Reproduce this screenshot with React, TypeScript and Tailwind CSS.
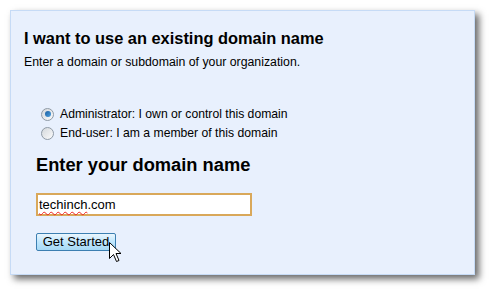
import { useState } from 'react'

function Radio({ checked }: { checked: boolean }) {
  return (
    <span className="relative flex h-[13px] w-[13px] shrink-0 items-center justify-center rounded-full border border-[#8f9aa5] bg-gradient-to-br from-[#d4d8dc] to-[#fbfbfb]">
      {checked && <span className="h-[6px] w-[6px] rounded-full bg-gradient-to-br from-[#1b5fa0] to-[#4fa1e0]" />}
    </span>
  )
}

function Cursor() {
  return (
    <svg className="absolute left-[73px] top-[9px]" width="13" height="21" viewBox="0 0 13 21">
      <path
        d="M0.5 0.5 L0.5 16.5 L4.5 12.5 L7.5 19.5 L10 18.5 L7 11.5 L12 11.5 Z"
        fill="#fff"
        stroke="#000"
        strokeWidth="1"
        strokeLinejoin="round"
      />
    </svg>
  )
}

export default function App() {
  const [role, setRole] = useState('admin')

  return (
    <div className="h-[292px] w-[493px] bg-white pl-[10px] pt-[10px]" style={{ fontFamily: '"Liberation Sans", Arial, sans-serif' }}>
      <div className="h-[265px] w-[465px] border border-[#c6dbf6] bg-[#e8f0fd] pl-[13px] pt-[18px] text-black shadow-[4px_4px_7px_rgba(0,0,0,0.6)]">
        <h1 className="text-[16.4px] font-bold leading-[18px]">I want to use an existing domain name</h1>
        <p className="mt-[8px] text-[12.3px] leading-[14px]">Enter a domain or subdomain of your organization.</p>

        {/* Account type */}
        <div className="mt-[38px] flex flex-col gap-[5px] pl-[17px] text-[12.2px] leading-[14px]">
          <label className="flex items-center gap-[6px]" onClick={() => setRole('admin')}>
            <Radio checked={role === 'admin'} />
            Administrator: I own or control this domain
          </label>
          <label className="flex items-center gap-[6px]" onClick={() => setRole('user')}>
            <Radio checked={role === 'user'} />
            End-user: I am a member of this domain
          </label>
        </div>

        <div className="pl-[12px]">
          <h2 className="mt-[14px] text-[18.3px] font-bold leading-[21px]">Enter your domain name</h2>

          {/* focused text field */}
          <div className="mt-[18px] flex h-[23px] w-[216px] items-center border-2 border-[#d9a85a] bg-white px-[1px] text-[13px] leading-[15px]">
            <span className="underline decoration-wavy decoration-[#e22] decoration-1 underline-offset-2">techinch</span>
            .com
          </div>

          <div className="relative mt-[17px] w-fit">
            <button
              className="block h-[18px] w-[80px] rounded-[2px] border border-[#3c7fb1] bg-gradient-to-b from-[#eaf6fd] via-[#bee6fd] to-[#a7d9f5] text-[13px] leading-[14px] text-black"
              style={{ fontFamily: '"Liberation Sans", Arial, sans-serif' }}
            >
              Get Started
            </button>
            <Cursor />
          </div>
        </div>
      </div>
    </div>
  )
}
